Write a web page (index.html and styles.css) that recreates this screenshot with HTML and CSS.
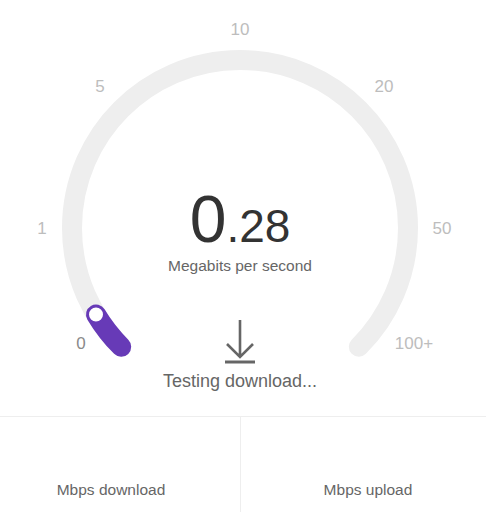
FILE: index.html
```html
<!DOCTYPE html>
<html lang="en">
<head>
    <meta charset="UTF-8">
    <meta name="viewport" content="width=device-width, initial-scale=1.0">
    <title>Speed Test</title>
    <link rel="stylesheet" href="styles.css">
</head>
<body>
    <div class="speed-test">
        <div class="gauge">
            <svg class="gauge-dial" width="486" height="416" viewBox="0 0 486 416">
                <!-- track: 270 degrees, centre (240,228), r 168 -->
                <path class="gauge-track" d="M 121.2 346.8 A 168 168 0 1 1 358.8 346.8"></path>
                <path class="gauge-fill" d="M 121.2 346.8 A 168 168 0 0 1 96 314.5"></path>
                <circle class="gauge-knob" cx="96" cy="314.5" r="7.8"></circle>

                <text class="gauge-label" x="240" y="29">10</text>
                <text class="gauge-label" x="100" y="86">5</text>
                <text class="gauge-label" x="384" y="86">20</text>
                <text class="gauge-label" x="42" y="228">1</text>
                <text class="gauge-label" x="442" y="228">50</text>
                <text class="gauge-label active" x="81" y="343">0</text>
                <text class="gauge-label" x="414" y="343">100+</text>
            </svg>

            <div class="readout">
                <div class="speed-value">0<span class="speed-decimals">.28</span></div>
                <div class="speed-unit">Megabits per second</div>
                <svg class="download-icon" width="32" height="46" viewBox="0 0 32 46">
                    <path d="M16 1 V38 M3 25 L16 38 L29 25"></path>
                    <path d="M1 43 H31" class="icon-bar"></path>
                </svg>
                <div class="status">Testing download...</div>
            </div>
        </div>

        <div class="results">
            <div class="result result-down">Mbps download</div>
            <div class="result result-up">Mbps upload</div>
        </div>
    </div>
</body>
</html>
```

FILE: styles.css
```css
body {
    margin: 0;
    padding: 0;
    background: #fff;
    font-family: 'Liberation Sans', Arial, sans-serif;
    color: #666;
}

.speed-test {
    width: 486px;
}

.gauge {
    position: relative;
    height: 416px;
}

.gauge-dial {
    position: absolute;
    top: 0;
    left: 0;
}

.gauge-track {
    fill: none;
    stroke: #eeeeee;
    stroke-width: 20;
    stroke-linecap: round;
}

.gauge-fill {
    fill: none;
    stroke: #673ab7;
    stroke-width: 20;
    stroke-linecap: round;
}

.gauge-knob {
    fill: #fff;
    stroke: #673ab7;
    stroke-width: 1.6;
}

.gauge-label {
    font-family: 'Liberation Sans', Arial, sans-serif;
    font-size: 17px;
    fill: #bdbdbd;
    text-anchor: middle;
    dominant-baseline: central;
}

.gauge-label.active {
    fill: #8a8a8a;
}

.readout {
    position: absolute;
    top: 186px;
    left: 0;
    width: 480px;
    display: flex;
    flex-direction: column;
    align-items: center;
}

.speed-value {
    font-size: 66px;
    line-height: 66px;
    color: #333;
}

.speed-decimals {
    font-size: 46px;
    line-height: 46px;
}

.speed-unit {
    margin-top: 5px;
    font-size: 15.5px;
    line-height: 18px;
    color: #666;
}

.download-icon {
    margin-top: 44px;
    fill: none;
    stroke: #666;
    stroke-width: 2.6;
}

.download-icon .icon-bar {
    stroke-width: 3;
}

.status {
    margin-top: 5px;
    font-size: 18px;
    line-height: 22px;
    color: #666;
}

.results {
    display: grid;
    grid-template-columns: 240px 1fr;
    border-top: 1px solid #eee;
    height: 95px;
}

.result {
    display: flex;
    align-items: flex-end;
    justify-content: center;
    padding-bottom: 13px;
    font-size: 15.5px;
    line-height: 18px;
    color: #666;
}

.result-down {
    padding-right: 18px;
}

.result-up {
    border-left: 1px solid #eee;
    padding-left: 9px;
}
```
